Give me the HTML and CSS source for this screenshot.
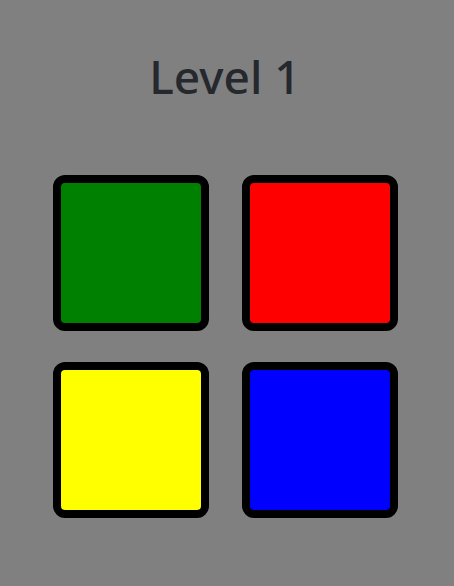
FILE: index.html
```html
<!DOCTYPE html>
<html>
<head>
<meta charset="utf-8">
<link rel="stylesheet" href="styles.css">
</head>
<body>
<main class="game">
  <h1 class="title">Level 1</h1>
  <div class="board">
    <div class="pad pad-green"></div>
    <div class="pad pad-red"></div>
    <div class="pad pad-yellow"></div>
    <div class="pad pad-blue"></div>
  </div>
</main>
</body>
</html>
```
FILE: styles.css
```css
html, body {
  margin: 0;
  padding: 0;
  background: #808080;
  height: 100%;
}
.game {
  display: flex;
  flex-direction: column;
  align-items: center;
  padding-right: 4px;
  font-family: "Noto Sans", "Open Sans", sans-serif;
}
.title {
  margin: 48px 0 0;
  font-size: 46px;
  font-weight: 500;
  line-height: 56px;
  color: #25282d;
}
.board {
  margin-top: 71px;
  display: grid;
  grid-template-columns: 156px 156px;
  column-gap: 33px;
  row-gap: 31px;
}
.pad {
  box-sizing: border-box;
  width: 156px;
  height: 156px;
  border: 8px solid #000;
  border-radius: 12px;
}
.pad-green { background: #008000; }
.pad-red { background: #ff0000; }
.pad-yellow { background: #ffff00; }
.pad-blue { background: #0000ff; }
```
